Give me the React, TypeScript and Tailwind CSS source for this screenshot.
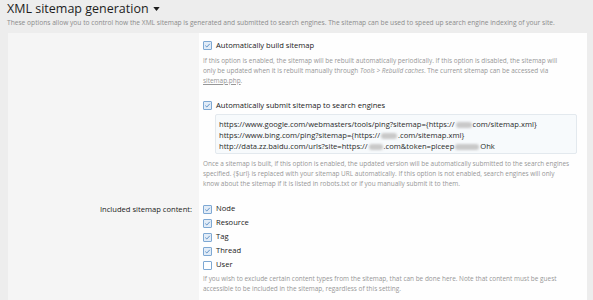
import React from "react";

const Check: React.FC<{ checked?: boolean }> = ({ checked }) => (
  <span
    className={
      "flex h-[9px] w-[9px] shrink-0 items-center justify-center rounded-[1px] border " +
      (checked ? "border-[#7ea8d3] bg-[#e2ecf7]" : "border-[#7ea8d3] bg-white")
    }
  >
    {checked && (
      <svg width="7" height="7" viewBox="0 0 7 7">
        <path d="M1.3 3.6 L2.8 5 L5.8 1.8" fill="none" stroke="#4f86c0" strokeWidth="0.9" />
      </svg>
    )}
  </span>
);

const Blur: React.FC<{ w: string }> = ({ w }) => (
  <span className={"mx-[1px] inline-block h-[6px] rounded-full bg-[#c9c9c9] align-middle blur-[1.2px] " + w} />
);

// explain text, broken where the screenshot breaks it
const Hint: React.FC<{ lines: React.ReactNode[]; className?: string }> = ({ lines, className }) => (
  <div className={"text-[6.45px] leading-[10px] text-[#979797] " + (className ?? "")}>
    {lines.map((l, i) => (
      <div key={i} className="whitespace-nowrap">
        {l}
      </div>
    ))}
  </div>
);

const items = [
  { label: "Node", checked: true },
  { label: "Resource", checked: true },
  { label: "Tag", checked: true },
  { label: "Thread", checked: true },
  { label: "User", checked: false },
];

const App: React.FC = () => {
  return (
    <div
      className="h-[300px] w-[593px] overflow-hidden bg-[#ededed] text-[#1a1a1a]"
      style={{ fontFamily: '"Open Sans", "Noto Sans", sans-serif' }}
    >
      <div className="px-[7px]">
        <h1 className="flex h-[17px] items-center gap-[4px] text-[12.5px] leading-[17px] text-[#1d1d1d]">
          XML sitemap generation
          <svg width="7" height="4" viewBox="0 0 8 5">
            <path d="M0 0 H8 L4 5 Z" fill="#1d1d1d" />
          </svg>
        </h1>
        <p className="mt-[1px] h-[10px] whitespace-nowrap text-[6.65px] leading-[10px] text-[#8c8c8c]">
          These options allow you to control how the XML sitemap is generated and submitted to search engines. The
          sitemap can be used to speed up search engine indexing of your site.
        </p>
      </div>

      <div className="ml-[8px] mr-[6px] mt-[5px]">
        {/* top options */}
        <div className="flex">
          <div className="w-[191px] shrink-0 bg-[#f5f5f5]" />
          <div className="flex-1 bg-[#fefefe] pl-[4px] pr-[8px] pt-[7px]">
            <div className="flex h-[11px] items-center gap-[4px] text-[7.6px]">
              <Check checked />
              <span>Automatically build sitemap</span>
            </div>
            <Hint
              className="mt-[5px]"
              lines={[
                "If this option is enabled, the sitemap will be rebuilt automatically periodically. If this option is disabled, the sitemap will",
                <>
                  only be updated when it is rebuilt manually through <i>Tools &gt; Rebuild caches</i>. The current
                  sitemap can be accessed via
                </>,
                <>
                  <span className="underline">sitemap.php</span>.
                </>,
              ]}
            />

            <div className="mt-[14px] flex h-[11px] items-center gap-[4px] text-[7.6px]">
              <Check checked />
              <span>Automatically submit sitemap to search engines</span>
            </div>
            <div className="ml-[12px] mr-[2px] mt-[3px] h-[40px] rounded-[2px] border border-[#e3e9ee] bg-[#f7fafc] px-[3px] pt-[4px] text-[7.6px] leading-[11px] text-[#2a2a2a]">
              <div className="whitespace-nowrap">
                https://www.google.com/webmasters/tools/ping?sitemap={"{"}https://
                <Blur w="w-[16px]" />
                com/sitemap.xml{"}"}
              </div>
              <div className="whitespace-nowrap">
                https://www.bing.com/ping?sitemap={"{"}https://
                <Blur w="w-[16px]" />
                .com/sitemap.xml{"}"}
              </div>
              <div className="whitespace-nowrap">
                http://data.zz.baidu.com/urls?site=https://
                <Blur w="w-[14px]" />
                .com&amp;token=plceep
                <Blur w="w-[24px]" />
                Ohk
              </div>
            </div>
            <Hint
              className="mt-[5px]"
              lines={[
                "Once a sitemap is built, if this option is enabled, the updated version will be automatically submitted to the search engines",
                "specified. {$url} is replaced with your sitemap URL automatically. If this option is not enabled, search engines will only",
                "know about the sitemap if it is listed in robots.txt or if you manually submit it to them.",
              ]}
            />
          </div>
        </div>

        {/* included content */}
        <div className="flex h-[120px]">
          <div className="flex w-[191px] shrink-0 justify-end bg-[#f5f5f5] pr-[7px] pt-[13px]">
            <span className="h-[14px] text-[7.6px] leading-[14px]">Included sitemap content:</span>
          </div>
          <div className="flex-1 bg-[#fefefe] pl-[4px] pr-[8px] pt-[13px]">
            {items.map((it) => (
              <div key={it.label} className="flex h-[14px] items-center gap-[4px] text-[7.6px]">
                <Check checked={it.checked} />
                <span>{it.label}</span>
              </div>
            ))}
            <Hint
              className="mt-[2px]"
              lines={[
                "If you wish to exclude certain content types from the sitemap, that can be done here. Note that content must be guest",
                "accessible to be included in the sitemap, regardless of this setting.",
              ]}
            />
          </div>
        </div>
      </div>
    </div>
  );
};

export default App;
